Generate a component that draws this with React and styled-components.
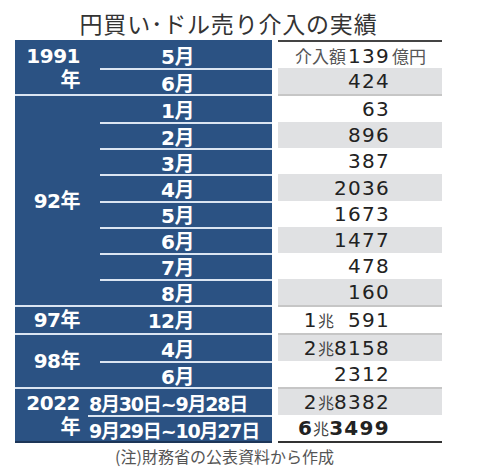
import React from 'react';
import styled, { createGlobalStyle } from 'styled-components';

const GlobalStyle = createGlobalStyle`
  body {
    margin: 0;
    background: #fff;
  }
`;

const groups = [
  {
    year: ['1991', '年'],
    yearWidth: 85,
    rows: [
      { month: '5月', label: '介入額', num: '139', unit: '億円' },
      { month: '6月', num: '424' },
    ],
  },
  {
    year: ['92年'],
    yearWidth: 85,
    rows: [
      { month: '1月', num: '63' },
      { month: '2月', num: '896' },
      { month: '3月', num: '387' },
      { month: '4月', num: '2036' },
      { month: '5月', num: '1673' },
      { month: '6月', num: '1477' },
      { month: '7月', num: '478' },
      { month: '8月', num: '160' },
    ],
  },
  {
    year: ['97年'],
    yearWidth: 85,
    rows: [{ month: '12月', cho: '1', num: '\u2007591' }],
  },
  {
    year: ['98年'],
    yearWidth: 85,
    rows: [
      { month: '4月', cho: '2', num: '8158' },
      { month: '6月', num: '2312' },
    ],
  },
  {
    year: ['2022', '年'],
    yearWidth: 73,
    wide: true,
    rows: [
      { month: '8月30日~9月28日', cho: '2', num: '8382' },
      { month: '9月29日~10月27日', cho: '6', num: '3499', bold: true },
    ],
  },
];

const App = () => {
  let index = 0;
  return (
    <>
      <GlobalStyle />
      <Wrapper>
        <Title>円買い･ドル売り介入の実績</Title>
        <Table>
          {groups.map((group, g) => (
            <Group key={g}>
              <LeftBlock first={g === 0} last={g === groups.length - 1}>
                <YearCell width={group.yearWidth} pad={group.wide ? 8 : 20}>
                  {group.year.map(line => (
                    <div key={line}>{line}</div>
                  ))}
                </YearCell>
                <Months>
                  {group.rows.map((row, r) => (
                    <MonthCell key={r} divided={r > 0} wide={group.wide}>
                      {row.month}
                    </MonthCell>
                  ))}
                </Months>
              </LeftBlock>
              <Values first={g === 0} last={g === groups.length - 1}>
                {group.rows.map((row, r) => {
                  const shaded = index++ % 2 === 1;
                  return (
                    <ValueCell key={r} shaded={shaded} bold={row.bold}>
                      <Num>
                        {row.label && <Label>{row.label}</Label>}
                        {row.cho && (
                          <>
                            {row.cho}
                            <Cho>兆</Cho>
                          </>
                        )}
                        {row.num}
                      </Num>
                      <Unit>{row.unit}</Unit>
                    </ValueCell>
                  );
                })}
              </Values>
            </Group>
          ))}
        </Table>
        <Note>(注)財務省の公表資料から作成</Note>
      </Wrapper>
    </>
  );
};

export default App;

const ROW = 26.1;

const Wrapper = styled.div`
  width: 427px;
  margin-left: 15px;
`;

const Title = styled.h1`
  margin: 0;
  height: 40px;
  line-height: 46px;
  text-align: center;
  font-family: 'Noto Sans CJK JP', sans-serif;
  font-size: 23px;
  font-weight: 400;
  color: #333;
  letter-spacing: 0.8px;
`;

const Table = styled.div`
  display: flex;
  flex-direction: column;
`;

const Group = styled.div`
  display: flex;
  gap: 6px;
`;

const LeftBlock = styled.div`
  display: flex;
  width: 257px;
  background: #2b5283;
  color: #fff;
  border-top: 2px solid ${p => (p.first ? '#2b5283' : '#dbe5f2')};
  border-bottom: ${p => (p.last ? '2px solid #1d3658' : 'none')};
  font-family: 'DejaVu Sans', 'Noto Sans CJK JP', sans-serif;
  font-weight: 700;
  font-size: 20px;
  letter-spacing: -0.5px;
`;

const YearCell = styled.div`
  width: ${p => p.width}px;
  padding-right: ${p => p.pad}px;
  box-sizing: border-box;
  display: flex;
  flex-direction: column;
  justify-content: center;
  align-items: flex-end;
  line-height: 24px;
`;

const Months = styled.div`
  flex: 1;
  display: flex;
  flex-direction: column;
`;

const MonthCell = styled.div`
  height: ${ROW}px;
  box-sizing: border-box;
  border-top: ${p => (p.divided ? '2px solid #dbe5f2' : 'none')};
  display: flex;
  align-items: center;
  justify-content: ${p => (p.wide ? 'flex-start' : 'flex-end')};
  padding-right: ${p => (p.wide ? 0 : 78)}px;
  padding-left: ${p => (p.wide ? 1 : 0)}px;
  font-size: ${p => (p.wide ? 19 : 20)}px;
  letter-spacing: ${p => (p.wide ? -1.2 : -0.5)}px;
  white-space: nowrap;
`;

const Values = styled.div`
  flex: 1;
  display: flex;
  flex-direction: column;
  border-top: 2px solid ${p => (p.first ? '#444' : '#c6c6c6')};
  border-bottom: ${p => (p.last ? '2px solid #333' : 'none')};
`;

const ValueCell = styled.div`
  height: ${ROW}px;
  box-sizing: border-box;
  display: flex;
  align-items: center;
  background: ${p => (p.shaded ? '#e0e1e3' : '#fff')};
  font-family: 'DejaVu Sans', 'Noto Sans CJK JP', sans-serif;
  font-size: 20px;
  font-weight: ${p => (p.bold ? 700 : 400)};
  color: #222;
  letter-spacing: 1.3px;
`;

const Num = styled.span`
  flex: 1;
  text-align: right;
  white-space: nowrap;
`;

const Label = styled.span`
  font-family: 'Noto Sans CJK JP', sans-serif;
  font-size: 17px;
  font-weight: 400;
  color: #555;
  letter-spacing: 0;
  margin-right: 2px;
`;

const Cho = styled.span`
  font-family: 'Noto Sans CJK JP', sans-serif;
  font-size: 16px;
  font-weight: 400;
  color: #444;
  letter-spacing: 0;
`;

const Unit = styled.span`
  width: 52px;
  padding-left: 2px;
  box-sizing: border-box;
  font-family: 'Noto Sans CJK JP', sans-serif;
  font-size: 17px;
  color: #555;
  letter-spacing: 0;
  white-space: nowrap;
`;

const Note = styled.div`
  height: 26px;
  line-height: 26px;
  text-align: center;
  font-family: 'Noto Sans CJK JP', sans-serif;
  font-size: 16px;
  color: #555;
  padding-right: 8px;
`;
